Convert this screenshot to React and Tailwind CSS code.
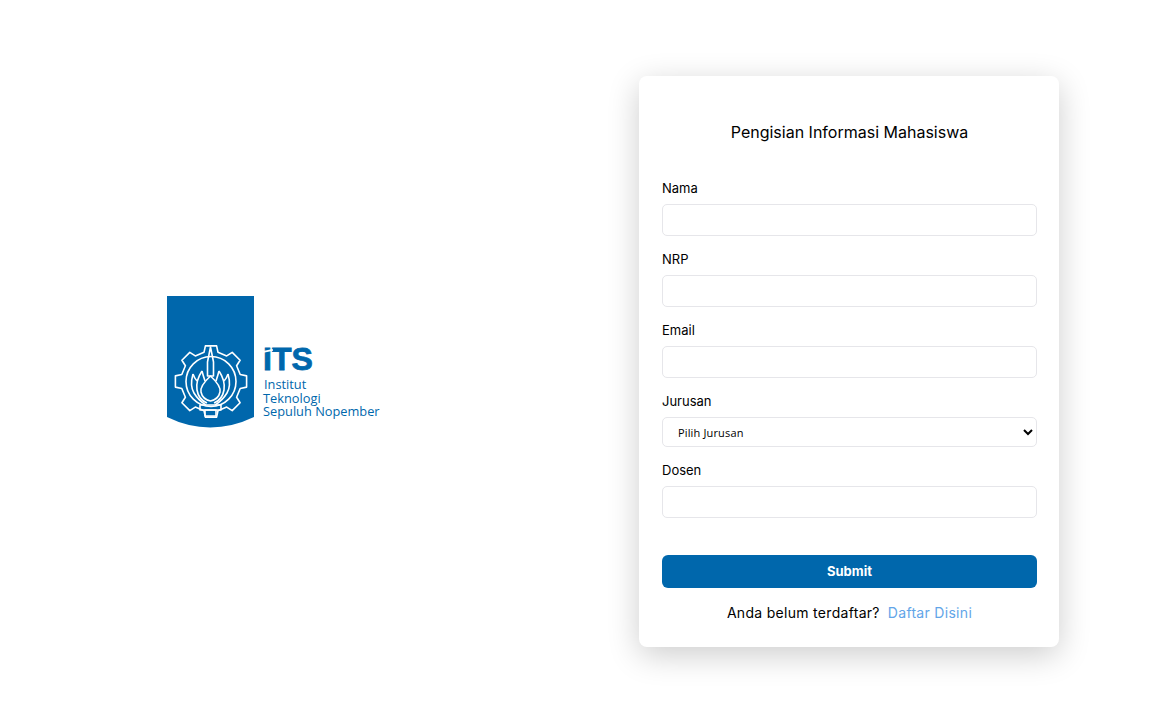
import React from 'react';

const BLUE = '#0067ac';
const FORM_FONT = "font-['Inter','Liberation_Sans',sans-serif]";

// 8-tooth gear outline around (cx, cy)
function gearPath(cx, cy, outer, inner, teeth = 8) {
  const pts = [];
  const step = (Math.PI * 2) / teeth;
  for (let i = 0; i < teeth; i++) {
    const a = i * step - Math.PI / 2;
    const w = step * 0.2;
    const r = step * 0.3;
    [
      [a - r, inner],
      [a - w, outer],
      [a + w, outer],
      [a + r, inner],
    ].forEach(([t, rad]) => {
      pts.push(`${(cx + rad * Math.cos(t)).toFixed(1)} ${(cy + rad * Math.sin(t)).toFixed(1)}`);
    });
  }
  return `M${pts.join('L')}Z`;
}

function ItsShield() {
  return (
    <svg width="87" height="133" viewBox="167 296 87 133" className="block shrink-0">
      <path d="M167 296H254V417Q210 438 167 417Z" fill={BLUE} />
      <g fill="none" stroke="#fff" strokeWidth="1.6" strokeLinejoin="round" className="blur-[0.3px]">
        <path d={gearPath(211, 381.5, 36, 30)} />
        <circle cx="211" cy="381.5" r="25" />
        <path d="M210.5 347L213.5 362V376H207.5V362Z" />
        {/* lotus: centre bud, then inner and outer petals on each side */}
        <path d="M210.5 376C204 382 200 387 201 392C202 397 206 400 210.5 401C215 400 219 397 220 392C221 387 217 382 210.5 376Z" />
        <path d="M202 371C198 377 196 384 197 390C198 396 202 401 207 403" />
        <path d="M202 371C203 375 204 378 205 381" />
        <path d="M219 371C223 377 225 384 224 390C223 396 219 401 214 403" />
        <path d="M219 371C218 375 217 378 216 381" />
        <path d="M193 374C191 381 191 388 194 393C197 398 201 402 206 405" />
        <path d="M193 374C194 377 195 379 197 381" />
        <path d="M228 374C230 381 230 388 227 393C224 398 220 402 215 405" />
        <path d="M228 374C227 377 226 379 224 381" />
        <path d="M200 405H221V410H200Z" />
        <path d="M205 410H216V416H205Z" />
      </g>
    </svg>
  );
}

function ItsLogo() {
  return (
    <div className="flex items-start">
      <ItsShield />
      <div className="pt-[51px] pl-[9px] font-['Open_Sans',sans-serif] text-[12.8px] leading-[13.5px] whitespace-nowrap text-[#0067ac]">
        <div className="relative mb-[7px] h-[24px] w-[50px]">
          <span className="block font-['Liberation_Sans',sans-serif] text-[32px] leading-[24px] font-bold [-webkit-text-stroke:0.8px_#0067ac]">
            ITS
          </span>
          <span className="absolute top-[3px] -left-px h-[2px] w-[11px] -rotate-12 bg-white" />
        </div>
        <div className="pl-px">Institut</div>
        <div>Teknologi</div>
        <div>Sepuluh Nopember</div>
      </div>
    </div>
  );
}

function Field({ label, className = 'mb-[14px]' }) {
  return (
    <div className={className}>
      <label className="mb-[7px] block text-[13px] leading-[18px] text-black">{label}</label>
      <input
        type="text"
        className="block h-[32px] w-full rounded-[5px] border border-[#e6e6ea] bg-white"
      />
    </div>
  );
}

export default function App() {
  return (
    <div className="flex min-h-[717px] items-center bg-white pt-[8px] pb-[2px]">
      <div className="flex w-[639px] shrink-0 pt-[2px] pl-[167px]">
        <ItsLogo />
      </div>

      <div className={`h-[571px] w-[420px] shrink-0 rounded-[8px] bg-white pt-[45px] pr-[22px] pl-[23px] shadow-[0_8px_32px_rgba(0,0,0,0.2)] ${FORM_FONT}`}>
        <h1 className="mb-[36px] text-center text-[16px] leading-[22px] font-normal text-black">
          Pengisian Informasi Mahasiswa
        </h1>

        <Field label="Nama" />
        <Field label="NRP" />
        <Field label="Email" />

        <div className="mb-[14px]">
          <label className="mb-[7px] block text-[13px] leading-[18px] text-black">Jurusan</label>
          <select className="block h-[30px] w-full rounded-[5px] border border-[#e6e6ea] bg-white pl-[11px] font-['Open_Sans',sans-serif] text-[11px] tracking-[0.15px] text-black">
            <option>Pilih Jurusan</option>
          </select>
        </div>

        <Field label="Dosen" className="mb-[37px]" />

        <button className="block h-[33px] w-full rounded-[6px] bg-[#0067ac] text-[13px] font-bold text-white">
          Submit
        </button>

        <p className="mt-[15px] text-center text-[14px] leading-[20px] tracking-[0.3px] text-black">
          Anda belum terdaftar?
          <a href="#" className="ml-[8px] text-[#62a5e8]">Daftar Disini</a>
        </p>
      </div>
    </div>
  );
}
